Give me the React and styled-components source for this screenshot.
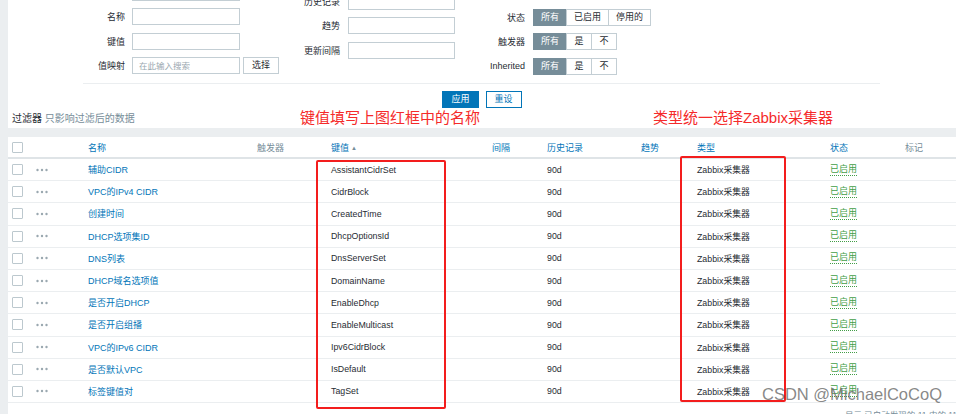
import React from "react";
import styled, { createGlobalStyle } from "styled-components";

const GlobalStyle = createGlobalStyle`
  html, body { margin: 0; padding: 0; background: #ebeef0; }
  body {
    font-family: "Liberation Sans", Arial, "Noto Sans CJK SC", sans-serif;
    color: #1f2c33;
  }
  * { box-sizing: border-box; }
`;

const Page = styled.div`
  position: relative;
  width: 956px;
  height: 414px;
  overflow: hidden;
  padding-left: 8px;
  display: flex;
  flex-direction: column;
`;

const FilterPanel = styled.section`
  background: #fff;
  height: 128px;
  flex: none;
  overflow: hidden;
  display: flex;
  flex-direction: column;
`;

const FilterFields = styled.div`
  display: flex;
  align-items: flex-start;
`;

const FieldColumn = styled.div`
  width: ${(p) => p.$width}px;
  margin-top: ${(p) => p.$top}px;
  display: flex;
  flex-direction: column;
  flex: none;
`;

const FieldRow = styled.div`
  display: flex;
  align-items: center;
  height: 24.5px;
  gap: ${(p) => p.$gap || 7}px;
`;

const FieldLabel = styled.label`
  width: ${(p) => p.$w}px;
  flex: none;
  text-align: right;
  font-size: 9px;
  color: #1f2c33;
  white-space: nowrap;
`;

const TextInput = styled.input`
  width: ${(p) => p.$w || 108}px;
  height: 17px;
  border: 1px solid #c3ced4;
  background: #fff;
  padding: 0 6px;
  font-family: inherit;
  font-size: 8.5px;
  color: #1f2c33;
  outline: none;
  &::placeholder { color: #9aa8b0; }
`;

const GrayButton = styled.span`
  height: 17px;
  margin-left: -4px;
  padding: 0 8px;
  border: 1px solid #c3ced4;
  background: #fff;
  font-size: 9px;
  line-height: 15px;
  color: #1f2c33;
`;

const Segmented = styled.div`
  display: flex;
  padding-left: 1px;
`;

const SegButton = styled.span`
  height: 17px;
  padding: 0 7px;
  margin-left: -1px;
  border: 1px solid ${(p) => (p.$active ? "#768d99" : "#c3ced4")};
  background: ${(p) => (p.$active ? "#768d99" : "#fff")};
  color: ${(p) => (p.$active ? "#fff" : "#1f2c33")};
  font-size: 9px;
  line-height: 15px;
  text-align: center;
  min-width: ${(p) => (p.$narrow ? 26 : 34)}px;
`;

const Divider = styled.div`
  height: 1px;
  background: #ebeef0;
  margin: 4px 76px 0 75px;
`;

const ButtonRow = styled.div`
  display: flex;
  justify-content: center;
  gap: 7px;
  margin-top: 7px;
`;

const ActionButton = styled.span`
  height: 17px;
  padding: 0 8px;
  border: 1px solid #0275b8;
  background: ${(p) => (p.$primary ? "#0275b8" : "#fff")};
  color: ${(p) => (p.$primary ? "#fff" : "#0275b8")};
  font-size: 9px;
  line-height: 15px;
`;

const FilterTitle = styled.div`
  margin-top: auto;
  height: 19px;
  line-height: 19px;
  padding-left: 4px;
  font-size: 10px;
  color: #1f2c33;
  span { color: #768d99; }
`;

const TablePanel = styled.section`
  background: #fff;
  margin-top: 9px;
  flex: 1;
  display: flex;
  flex-direction: column;
`;

const GridRow = styled.div`
  display: grid;
  grid-template-columns: 24px 52px 169px 74px 161px 55px 94px 56px 133px 75px 1fr;
  align-items: center;
  padding-left: 4px;
  flex: none;
  height: ${(p) => (p.$head ? 22 : 22.2)}px;
  border-bottom: ${(p) => (p.$head ? "2px solid #dfe4e7" : "1px solid #ebeef0")};
  font-size: 8.8px;
  white-space: nowrap;
`;

const HeadCell = styled.span`
  color: ${(p) => (p.$sortable ? "#0275b8" : "#768d99")};
  font-size: 9px;
`;

const SortArrow = styled.span`
  color: #768d99;
  font-size: 6px;
  margin-left: 2px;
  vertical-align: 1px;
`;

const Checkbox = styled.span`
  display: block;
  width: 11px;
  height: 11px;
  border: 1px solid #bcc8ce;
  border-radius: 1px;
  background: #fff;
`;

const NameLink = styled.span`
  color: #0275b8;
  font-size: 9px;
`;

const Cell = styled.span`
  color: #1f2c33;
`;

const Status = styled.span`
  color: #429e47;
  font-size: 9px;
  border-bottom: 1px dotted #429e47;
  justify-self: start;
  line-height: 11px;
`;

const Footer = styled.div`
  padding-left: 837px;
  margin-top: 5px;
  font-size: 8.5px;
  color: #768d99;
  white-space: nowrap;
`;

const RedBox = styled.div`
  position: absolute;
  left: ${(p) => p.$x}px;
  top: ${(p) => p.$y}px;
  width: ${(p) => p.$w}px;
  height: ${(p) => p.$h}px;
  border: 2px solid #f31d1d;
  border-radius: 2px;
  pointer-events: none;
`;

const Note = styled.div`
  position: absolute;
  left: ${(p) => p.$x}px;
  top: 109px;
  font-size: 15px;
  line-height: 18px;
  color: #f52a2a;
  white-space: nowrap;
`;

const Watermark = styled.div`
  position: absolute;
  left: 762px;
  top: 385px;
  font-size: 16.5px;
  line-height: 19px;
  color: rgba(105, 105, 105, 0.8);
  white-space: nowrap;
`;

const Dots = () => (
  <svg width="12" height="4" viewBox="0 0 12 4">
    <circle cx="1.5" cy="2" r="1.2" fill="#9aa8b0" />
    <circle cx="6" cy="2" r="1.2" fill="#9aa8b0" />
    <circle cx="10.5" cy="2" r="1.2" fill="#9aa8b0" />
  </svg>
);

const items = [
  ["辅助CIDR", "AssistantCidrSet"],
  ["VPC的IPv4 CIDR", "CidrBlock"],
  ["创建时间", "CreatedTime"],
  ["DHCP选项集ID", "DhcpOptionsId"],
  ["DNS列表", "DnsServerSet"],
  ["DHCP域名选项值", "DomainName"],
  ["是否开启DHCP", "EnableDhcp"],
  ["是否开启组播", "EnableMulticast"],
  ["VPC的IPv6 CIDR", "Ipv6CidrBlock"],
  ["是否默认VPC", "IsDefault"],
  ["标签键值对", "TagSet"],
];

export default function App() {
  return (
    <>
      <GlobalStyle />
      <Page>
        <FilterPanel>
          <FilterFields>
            <FieldColumn $width={272} $top={-20}>
              <FieldRow>
                <FieldLabel $w={117} />
                <TextInput readOnly />
              </FieldRow>
              <FieldRow>
                <FieldLabel $w={117}>名称</FieldLabel>
                <TextInput readOnly />
              </FieldRow>
              <FieldRow>
                <FieldLabel $w={117}>键值</FieldLabel>
                <TextInput readOnly />
              </FieldRow>
              <FieldRow>
                <FieldLabel $w={117}>值映射</FieldLabel>
                <TextInput readOnly placeholder="在此输入搜索" />
                <GrayButton>选择</GrayButton>
              </FieldRow>
            </FieldColumn>
            <FieldColumn $width={180} $top={-11}>
              <FieldRow $gap={8}>
                <FieldLabel $w={60}>历史记录</FieldLabel>
                <TextInput readOnly $w={107} />
              </FieldRow>
              <FieldRow $gap={8}>
                <FieldLabel $w={60}>趋势</FieldLabel>
                <TextInput readOnly $w={107} />
              </FieldRow>
              <FieldRow $gap={8}>
                <FieldLabel $w={60}>更新间隔</FieldLabel>
                <TextInput readOnly $w={107} />
              </FieldRow>
            </FieldColumn>
            <FieldColumn $width={300} $top={5}>
              <FieldRow $gap={8}>
                <FieldLabel $w={65}>状态</FieldLabel>
                <Segmented>
                  <SegButton $active>所有</SegButton>
                  <SegButton>已启用</SegButton>
                  <SegButton>停用的</SegButton>
                </Segmented>
              </FieldRow>
              <FieldRow $gap={8}>
                <FieldLabel $w={65}>触发器</FieldLabel>
                <Segmented>
                  <SegButton $active>所有</SegButton>
                  <SegButton $narrow>是</SegButton>
                  <SegButton $narrow>不</SegButton>
                </Segmented>
              </FieldRow>
              <FieldRow $gap={8}>
                <FieldLabel $w={65}>Inherited</FieldLabel>
                <Segmented>
                  <SegButton $active>所有</SegButton>
                  <SegButton $narrow>是</SegButton>
                  <SegButton $narrow>不</SegButton>
                </Segmented>
              </FieldRow>
            </FieldColumn>
          </FilterFields>
          <Divider />
          <ButtonRow>
            <ActionButton $primary>应用</ActionButton>
            <ActionButton>重设</ActionButton>
          </ButtonRow>
          <FilterTitle>
            过滤器 <span>只影响过滤后的数据</span>
          </FilterTitle>
        </FilterPanel>

        <TablePanel>
          <GridRow $head>
            <Checkbox />
            <span />
            <HeadCell $sortable>名称</HeadCell>
            <HeadCell>触发器</HeadCell>
            <HeadCell $sortable>
              键值<SortArrow>▲</SortArrow>
            </HeadCell>
            <HeadCell $sortable>间隔</HeadCell>
            <HeadCell $sortable>历史记录</HeadCell>
            <HeadCell $sortable>趋势</HeadCell>
            <HeadCell $sortable>类型</HeadCell>
            <HeadCell $sortable>状态</HeadCell>
            <HeadCell>标记</HeadCell>
          </GridRow>
          {items.map(([name, key]) => (
            <GridRow key={key}>
              <Checkbox />
              <Dots />
              <NameLink>{name}</NameLink>
              <span />
              <Cell>{key}</Cell>
              <span />
              <Cell>90d</Cell>
              <span />
              <Cell>Zabbix采集器</Cell>
              <Status>已启用</Status>
              <span />
            </GridRow>
          ))}
          <Footer>显示 已自动发现的 11 中的 11</Footer>
        </TablePanel>

        <Note $x={300}>键值填写上图红框中的名称</Note>
        <Note $x={653}>类型统一选择Zabbix采集器</Note>
        <RedBox $x={316} $y={160} $w={130} $h={249} />
        <RedBox $x={680} $y={156} $w={106} $h={246} />
        <Watermark>CSDN @MichaelCoCoQ</Watermark>
      </Page>
    </>
  );
}
